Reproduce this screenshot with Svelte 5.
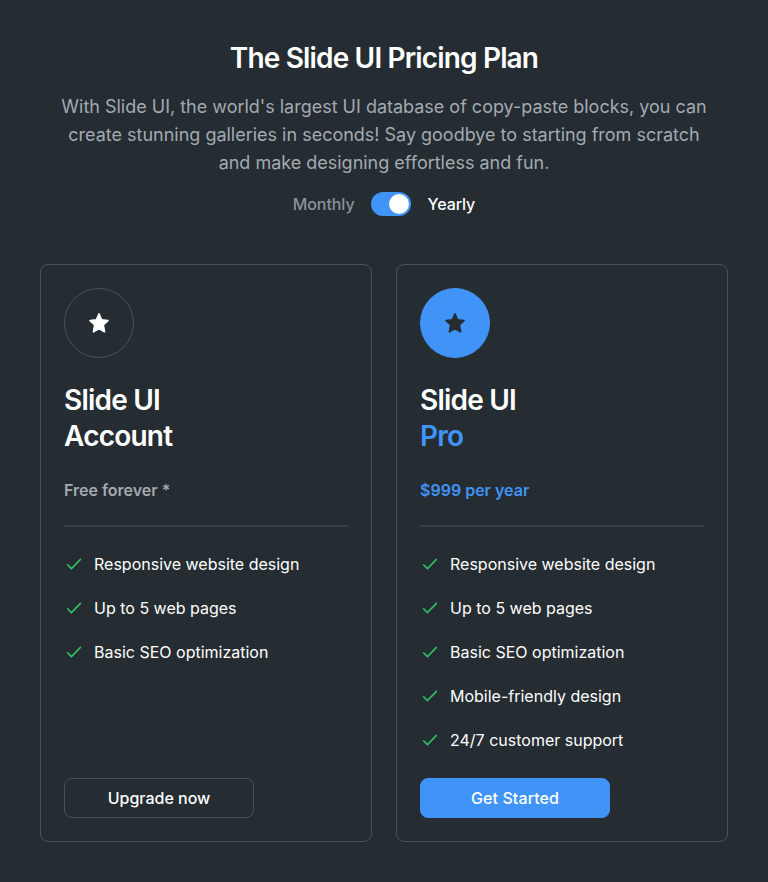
<script>
  const plans = [
    {
      name: 'Account', price: 'Free forever *', pro: false, cta: 'Upgrade now',
      features: ['Responsive website design', 'Up to 5 web pages', 'Basic SEO optimization']
    },
    {
      name: 'Pro', price: '$999 per year', pro: true, cta: 'Get Started',
      features: ['Responsive website design', 'Up to 5 web pages', 'Basic SEO optimization', 'Mobile-friendly design', '24/7 customer support']
    }
  ];
  let yearly = $state(true);
</script>

<main>
  <header>
    <h1>The Slide UI Pricing Plan</h1>
    <p>With Slide UI, the world's largest UI database of copy-paste blocks, you can<br />create stunning galleries in seconds! Say goodbye to starting from scratch<br />and make designing effortless and fun.</p>
    <div class="period">
      <span class:active={!yearly}>Monthly</span>
      <button class="switch" class:on={yearly} role="switch" aria-checked={yearly} aria-label="Yearly billing" onclick={() => (yearly = !yearly)}><i></i></button>
      <span class:active={yearly}>Yearly</span>
    </div>
  </header>
  <section class="plans">
    {#each plans as plan}
      <article class:pro={plan.pro}>
        <div class="badge">
          <svg width="24" height="24" viewBox="0 0 24 24" fill="currentColor" stroke="currentColor" stroke-width="1.8" stroke-linejoin="round"><path d="M12 3l2.6 6 6.3.6-4.7 4.3 1.3 6.8-5.5-3.2-5.5 3.2 1.3-6.8-4.7-4.3 6.3-.6z" /></svg>
        </div>
        <h2>Slide UI<br /><span>{plan.name}</span></h2>
        <div class="price">{plan.price}</div>
        <ul>
          {#each plan.features as feature}
            <li>
              <svg width="20" height="20" viewBox="0 0 20 20" fill="none" stroke="currentColor" stroke-width="1.6" stroke-linecap="round" stroke-linejoin="round"><path d="M3.6 10.8l3.8 3.8L16.4 5.4" /></svg>
              <span>{feature}</span>
            </li>
          {/each}
        </ul>
        <button class="cta">{plan.cta}</button>
      </article>
    {/each}
  </section>
</main>

<style>
  :global(body) { background: #252c32; }
  main { box-sizing: border-box; width: 768px; height: 882px; padding: 40px; background: #252c32; color: #fff; font-family: Inter, sans-serif; }
  header { display: flex; flex-direction: column; align-items: center; text-align: center; }
  h1 { margin: 0; font-size: 28px; line-height: 36px; font-weight: 600; letter-spacing: -0.84px; }
  p { margin: 17px 0 15px; font-size: 18px; line-height: 28px; letter-spacing: -0.01px; color: #a3aab1; white-space: nowrap; }
  .period { display: flex; align-items: center; gap: 16.5px; font-size: 16px; line-height: 24px; font-weight: 500; letter-spacing: -0.08px; color: #8b9299; }
  .active { color: #fff; }
  .switch { width: 40px; height: 24px; border: 0; border-radius: 12px; padding: 2px; display: flex; background: #48535b; }
  .switch i { width: 20px; height: 20px; border-radius: 50%; background: #fff; }
  .switch.on { background: #4094f7; justify-content: flex-end; }
  .plans { display: grid; grid-template-columns: 1fr 1fr; gap: 24px; margin-top: 48px; }
  article { box-sizing: border-box; height: 578px; border: 1px solid #48535b; border-radius: 8px; padding: 23px; display: flex; flex-direction: column; }
  .badge { box-sizing: border-box; width: 70px; height: 70px; border: 1px solid #48535b; border-radius: 50%; display: flex; align-items: center; justify-content: center; }
  h2 { margin: 24px 0 0; font-size: 28px; line-height: 36px; font-weight: 600; letter-spacing: -0.78px; }
  .price { margin-top: 24px; padding-bottom: 23px; border-bottom: 2px solid #383f46; font-size: 16px; line-height: 24px; font-weight: 600; color: #a3aab1; }
  ul { list-style: none; margin: 25px 0 0; padding: 0; display: flex; flex-direction: column; gap: 20px; }
  li { display: flex; align-items: center; gap: 10px; font-size: 16px; line-height: 24px; }
  li svg { color: #2fc266; }
  .cta { box-sizing: border-box; margin-top: auto; width: 190px; height: 40px; border: 1px solid #48535b; border-radius: 8px; background: transparent; color: #fff; font: 500 16px/24px Inter, sans-serif; }
  .pro .badge { background: #4094f7; border-color: #4094f7; color: #252c32; }
  .pro h2 span, .pro .price { color: #4094f7; }
  .pro .cta { background: #4094f7; border-color: #4094f7; letter-spacing: 0.1px; }
</style>
